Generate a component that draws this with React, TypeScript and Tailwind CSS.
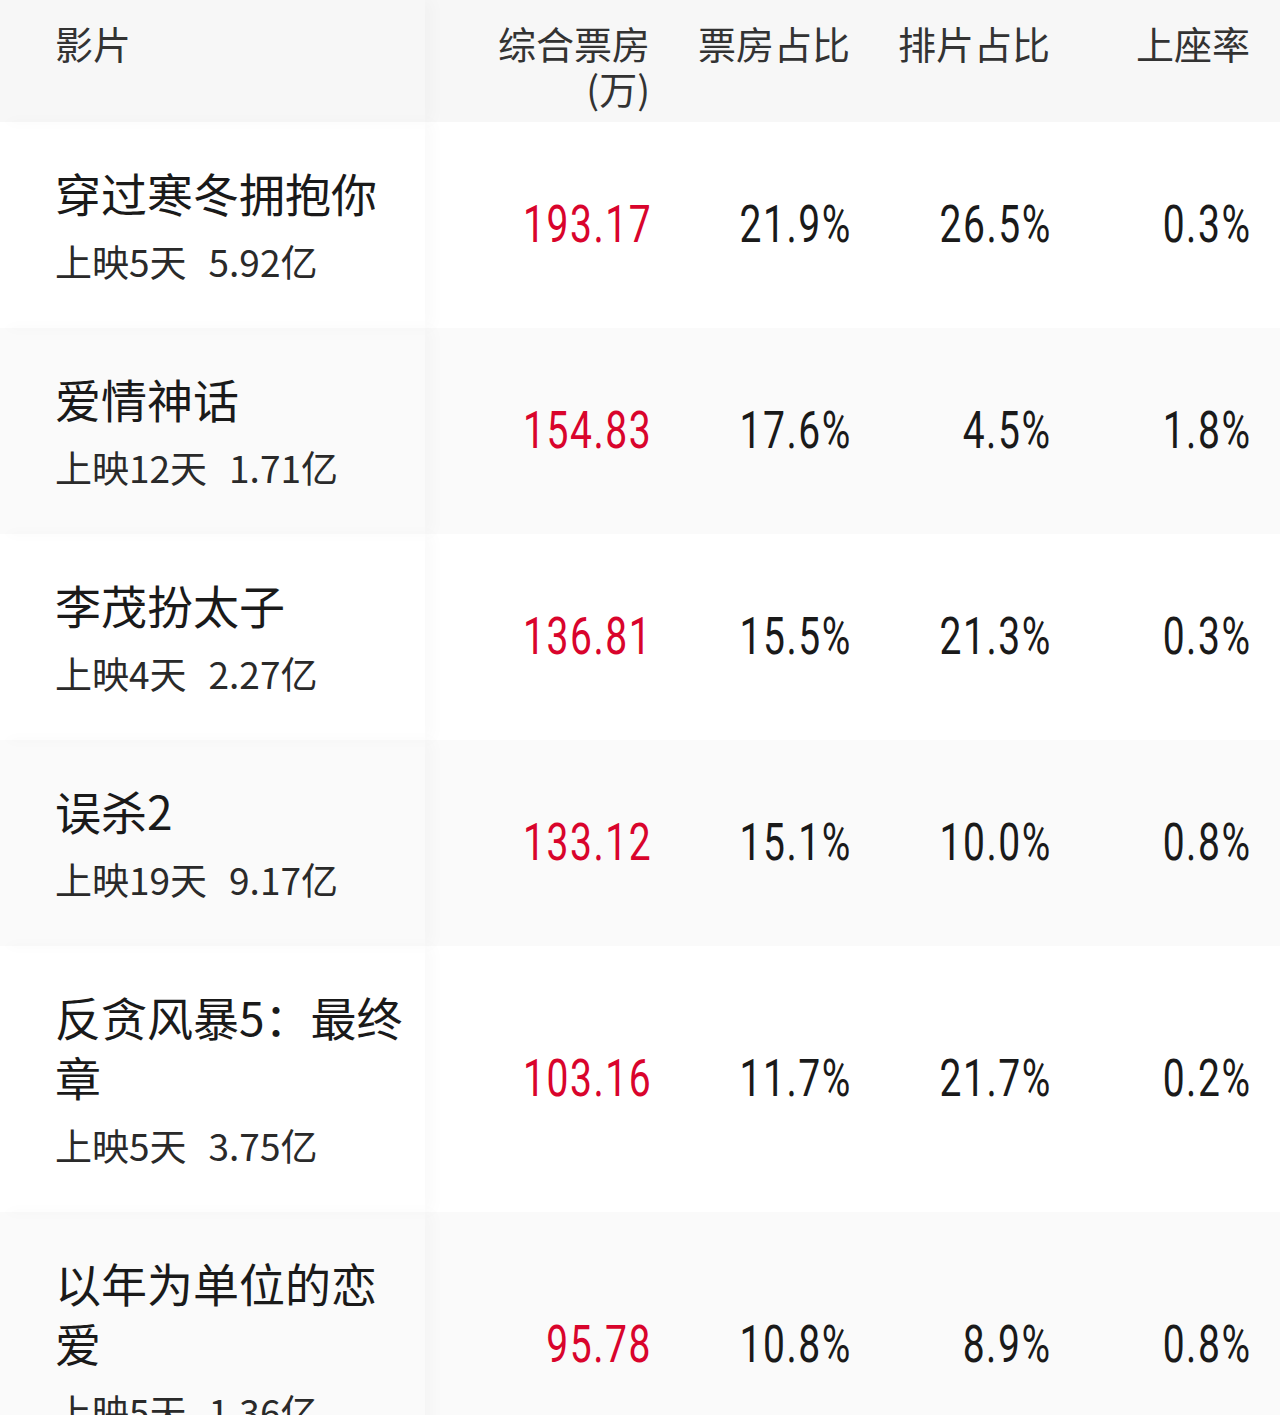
import React from 'react';

interface Film {
  title: string;
  days: number;
  total: string;
  boxOffice: string;
  boxShare: string;
  showShare: string;
  seatRate: string;
}

const films: Film[] = [
  { title: '穿过寒冬拥抱你', days: 5, total: '5.92亿', boxOffice: '193.17', boxShare: '21.9%', showShare: '26.5%', seatRate: '0.3%' },
  { title: '爱情神话', days: 12, total: '1.71亿', boxOffice: '154.83', boxShare: '17.6%', showShare: '4.5%', seatRate: '1.8%' },
  { title: '李茂扮太子', days: 4, total: '2.27亿', boxOffice: '136.81', boxShare: '15.5%', showShare: '21.3%', seatRate: '0.3%' },
  { title: '误杀2', days: 19, total: '9.17亿', boxOffice: '133.12', boxShare: '15.1%', showShare: '10.0%', seatRate: '0.8%' },
  { title: '反贪风暴5：最终章', days: 5, total: '3.75亿', boxOffice: '103.16', boxShare: '11.7%', showShare: '21.7%', seatRate: '0.2%' },
  { title: '以年为单位的恋爱', days: 5, total: '1.36亿', boxOffice: '95.78', boxShare: '10.8%', showShare: '8.9%', seatRate: '0.8%' },
];

const cjk = "font-['Noto_Sans_CJK_SC','Liberation_Sans',sans-serif]";

// narrow digits: squeeze Roboto horizontally
const Num: React.FC<{ value: string; red?: boolean; width: string }> = ({ value, red, width }) => (
  <div className={`${width} flex items-center justify-end`}>
    <span
      className={`inline-block origin-right scale-x-[0.75] tracking-[0.04em] -mr-[2px] text-[52px] leading-none font-normal font-['Roboto','Liberation_Sans',sans-serif] ${
        red ? 'text-[#d9042c]' : 'text-[#1a1a1a]'
      }`}
    >
      {value}
    </span>
  </div>
);

const App: React.FC = () => {
  return (
    <div className={`w-[1280px] min-h-[1415px] bg-white ${cjk}`}>
      {/* HEADER */}
      <div className="flex bg-[#f7f7f7] text-[38px] leading-[45px] text-[#333] h-[122px]">
        <div className="w-[425px] pl-[55px] pt-[20px] relative z-10 shadow-[8px_0_14px_rgba(0,0,0,0.025)]">影片</div>
        <div className="w-[225px] pt-[20px] text-right">
          综合票房
          <br />
          (万)
        </div>
        <div className="w-[200px] pt-[20px] text-right">票房占比</div>
        <div className="w-[200px] pt-[20px] text-right">排片占比</div>
        <div className="w-[200px] pt-[20px] text-right">上座率</div>
      </div>

      {/* ROWS */}
      {films.map((f, i) => (
        <div key={f.title} className={`flex ${i % 2 === 1 ? 'bg-[#fafafa]' : 'bg-white'}`}>
          <div className="w-[425px] shrink-0 pl-[55px] pr-[15px] pt-[40px] pb-[42px] relative z-10 shadow-[8px_0_14px_rgba(0,0,0,0.025)]">
            <div className="text-[46px] leading-[60px] text-[#1a1a1a]">{f.title}</div>
            <div className="mt-[14px] text-[37px] leading-[50px] text-[#2a2a2a] whitespace-nowrap">
              上映{f.days}天<span className="ml-[22px]">{f.total}</span>
            </div>
          </div>
          <Num value={f.boxOffice} red width="w-[225px]" />
          <Num value={f.boxShare} width="w-[200px]" />
          <Num value={f.showShare} width="w-[200px]" />
          <Num value={f.seatRate} width="w-[200px]" />
        </div>
      ))}
    </div>
  );
};

export default App;
